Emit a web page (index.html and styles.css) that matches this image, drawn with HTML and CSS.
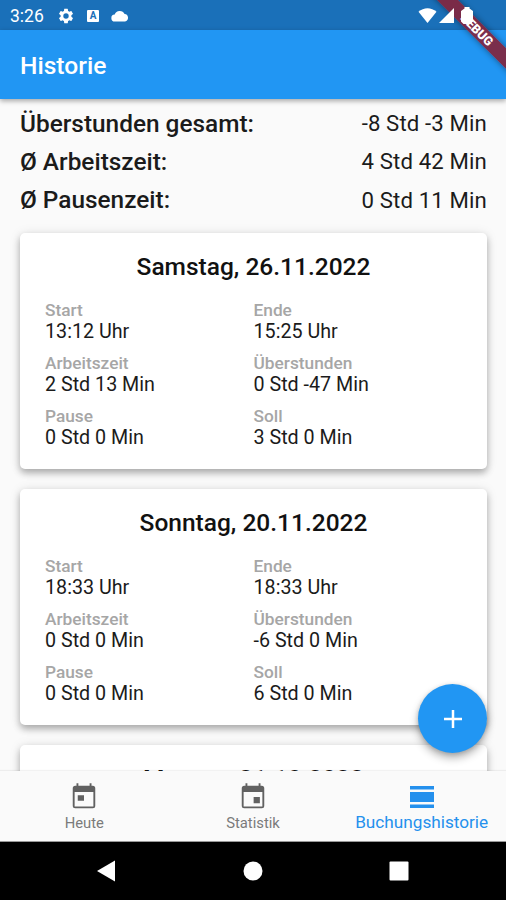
FILE: index.html
```html
<!DOCTYPE html>
<html lang="de">
<head>
<meta charset="utf-8">
<title>Historie</title>
<link rel="stylesheet" href="styles.css">
</head>
<body>
<div class="screen">
  <div class="statusbar">
    <span class="clock">3:26</span>
    <svg class="gear" viewBox="0 0 24 24"><path d="M19.14 12.94c.04-.3.06-.61.06-.94 0-.32-.02-.64-.07-.94l2.03-1.58a.49.49 0 0 0 .12-.61l-1.92-3.32a.49.49 0 0 0-.59-.22l-2.39.96c-.5-.38-1.03-.7-1.62-.94l-.36-2.54a.48.48 0 0 0-.48-.41h-3.84c-.24 0-.43.17-.47.41l-.36 2.54c-.59.24-1.13.57-1.62.94l-2.39-.96a.48.48 0 0 0-.59.22L2.74 8.87c-.12.21-.08.47.12.61l2.03 1.58c-.05.3-.09.63-.09.94s.02.64.07.94l-2.03 1.58a.49.49 0 0 0-.12.61l1.92 3.32c.12.22.37.29.59.22l2.39-.96c.5.38 1.03.7 1.62.94l.36 2.54c.05.24.24.41.48.41h3.84c.24 0 .44-.17.47-.41l.36-2.54c.59-.24 1.13-.56 1.62-.94l2.39.96c.22.08.47 0 .59-.22l1.92-3.32a.47.47 0 0 0-.12-.61l-2.01-1.58zM12 15.6A3.6 3.6 0 1 1 12 8.4a3.6 3.6 0 0 1 0 7.2z"/></svg>
    <span class="keyboard">A</span>
    <svg class="cloud" viewBox="0 0 18 12"><path d="M4 11.500a3.500 3.500 0 0 1-.3-7A5.400 5.400 0 0 1 13.600 4a3.800 3.800 0 0 1 .4 7.500z"/></svg>
    <div class="signals">
      <svg class="wifi" viewBox="0 0 18 15"><path d="M0 3.700C5.200-1 12.800-1 18 3.700L9 15z"/></svg>
      <svg class="cell" viewBox="0 0 15 15"><path d="M15 0v15H0z"/></svg>
      <svg class="battery" viewBox="0 0 12 17"><path d="M3.500 0h5v1.500L12 4v10.500L9.500 17h-7L0 14.500V4l3.500-2.500z"/></svg>
    </div>
  </div>
  <header class="appbar"><h1>Historie</h1></header>
  <div class="banner">DEBUG</div>

  <main class="content">
    <dl class="summary">
      <div><dt>Überstunden gesamt:</dt><dd>-8 Std -3 Min</dd></div>
      <div><dt>Ø Arbeitszeit:</dt><dd>4 Std 42 Min</dd></div>
      <div><dt>Ø Pausenzeit:</dt><dd>0 Std 11 Min</dd></div>
    </dl>
    <section class="card">
      <h2>Samstag, 26.11.2022</h2>
      <dl class="facts">
        <div><dt>Start</dt><dd>13:12 Uhr</dd></div>
        <div><dt>Ende</dt><dd>15:25 Uhr</dd></div>
        <div><dt>Arbeitszeit</dt><dd>2 Std 13 Min</dd></div>
        <div><dt>Überstunden</dt><dd>0 Std -47 Min</dd></div>
        <div><dt>Pause</dt><dd>0 Std 0 Min</dd></div>
        <div><dt>Soll</dt><dd>3 Std 0 Min</dd></div>
      </dl>
    </section>
    <section class="card">
      <h2>Sonntag, 20.11.2022</h2>
      <dl class="facts">
        <div><dt>Start</dt><dd>18:33 Uhr</dd></div>
        <div><dt>Ende</dt><dd>18:33 Uhr</dd></div>
        <div><dt>Arbeitszeit</dt><dd>0 Std 0 Min</dd></div>
        <div><dt>Überstunden</dt><dd>-6 Std 0 Min</dd></div>
        <div><dt>Pause</dt><dd>0 Std 0 Min</dd></div>
        <div><dt>Soll</dt><dd>6 Std 0 Min</dd></div>
      </dl>
    </section>
    <section class="card">
      <h2>Montag, 31.10.2022</h2>
    </section>
    <button class="fab" aria-label="Hinzufügen"><svg viewBox="0 0 18 18"><path d="M9 0v18M0 9h18"/></svg></button>
  </main>

  <nav class="tabs">
    <a class="tab"><svg viewBox="0 0 24 24"><path d="M19 3h-1V1h-1.500v2h-9V1H6v2H5a2 2 0 0 0-2 2v14a2 2 0 0 0 2 2h14a2 2 0 0 0 2-2V5a2 2 0 0 0-2-2zm.5 16.500h-15V8h15v11.500zM7 10.500h5v4.500H7z"/></svg><span>Heute</span></a>
    <a class="tab"><svg viewBox="0 0 24 24"><path d="M17.500 12h-5v5h5v-5zM16.500 1v2h-9V1H6v2H5a2 2 0 0 0-2 2v14a2 2 0 0 0 2 2h14a2 2 0 0 0 2-2V5a2 2 0 0 0-2-2h-1V1h-1.500zm3 18.500h-15V8h15v11.500z"/></svg><span>Statistik</span></a>
    <a class="tab active"><svg viewBox="0 0 24 22"><path d="M0 0h24v3.500H0zM0 6h24v10H0zM0 18.500h24V22H0z"/></svg><span>Buchungshistorie</span></a>
  </nav>
  <div class="sysnav">
    <svg viewBox="0 0 22 22"><path d="M20 .5v21L2 11z"/></svg>
    <svg viewBox="0 0 22 22"><circle cx="11" cy="11" r="9.500"/></svg>
    <svg viewBox="0 0 22 22"><rect x="1.500" y="1.500" width="19" height="19" rx="1"/></svg>
  </div>
</div>
</body>
</html>
```
FILE: styles.css
```css
* { box-sizing: border-box; margin: 0; padding: 0; }
body { font-family: Roboto, "Liberation Sans", sans-serif; color: #1b1b1b; background: #fafafa; }
.screen { position: relative; width: 506px; height: 900px; overflow: hidden; display: flex; flex-direction: column; }

.statusbar { height: 30px; flex: none; background: #1a70b9; display: flex; align-items: center; padding: 1px 33px 0 10px; color: #fff; }
.statusbar svg { fill: #fff; }
.clock { width: 47px; font-size: 17.5px; line-height: 30px; }
.gear { width: 18px; height: 18px; }
.keyboard { width: 12px; height: 12px; margin-left: 12px; border-radius: 1px; background: #fff; color: #1a70b9; font-size: 10px; font-weight: 700; line-height: 12px; text-align: center; }
.cloud { width: 18px; height: 12px; margin-left: 12px; }
.signals { position: relative; z-index: 3; margin-left: auto; display: flex; align-items: center; margin-top: -1px; }
.wifi { width: 19px; height: 15px; }
.cell { width: 15px; height: 15px; margin-left: 2px; }
.battery { width: 12px; height: 17px; margin-left: 7px; }

.appbar { height: 69px; flex: none; background: #2196f3; display: flex; align-items: center; padding: 2px 0 0 20px; position: relative; z-index: 1; box-shadow: 0 2px 5px rgba(0,0,0,.34); }
.appbar h1 { color: #fff; font-size: 24.6px; font-weight: 500; line-height: 30px; }
.banner { position: absolute; z-index: 2; left: 412px; top: 22px; width: 130px; height: 15px; transform: rotate(45deg); background: rgba(130,37,62,.92); box-shadow: 0 0 6px rgba(0,0,0,.45); color: #fff; font-size: 12.5px; font-weight: 900; line-height: 15px; text-align: center; }

.content { position: relative; flex: 1; min-height: 0; overflow: hidden; padding: 5px 19px 0 20px; }
.summary > div { display: flex; justify-content: space-between; align-items: center; height: 38.3px; }
.summary dt { font-size: 24.4px; font-weight: 500; }
.summary dd { font-size: 22.2px; font-weight: 400; letter-spacing: .13px; }
.card { height: 236px; margin: 14px 0 20px; padding: 19px 25px; border-radius: 5px; background: #fff; box-shadow: 0 4px 7px rgba(0,0,0,.28), 0 1px 12px rgba(0,0,0,.1); }
.card + .card { margin-top: 0; }
.card h2 { font-size: 24.5px; font-weight: 500; line-height: 30px; text-align: center; color: #111; }
.facts { display: grid; grid-template-columns: 1fr 1fr; row-gap: 11px; margin-top: 18.5px; }
.facts > div { height: 42px; }
.facts dt { font-size: 17.3px; font-weight: 500; line-height: 21px; color: #a6a6a6; }
.facts dd { font-size: 19.7px; line-height: 21px; }
.fab { position: absolute; left: 418px; top: 585px; width: 69px; height: 69px; border: 0; border-radius: 50%; background: #2196f3; display: grid; place-items: center; box-shadow: 0 5px 9px rgba(0,0,0,.3), 0 1px 4px rgba(0,0,0,.15); }
.fab svg { width: 18px; height: 18px; fill: none; stroke: #fff; stroke-width: 2.5; }

.tabs { height: 71px; flex: none; position: relative; background: #fafafa; display: grid; grid-template-columns: repeat(3, 1fr); border-bottom: 1px solid #999; box-shadow: 0 -1px 1px rgba(0,0,0,.05); }
.tab { display: flex; flex-direction: column; align-items: center; padding-top: 11px; color: #7b7b7b; font-size: 14.8px; }
.tab svg { width: 30px; height: 30px; fill: #616161; }
.tab span { line-height: 20px; margin-top: 1px; white-space: nowrap; }
.tab.active { color: #2490ed; font-size: 17.2px; }
.tab.active svg { width: 24px; height: 22px; fill: #2490ed; margin: 4px 0 3px; }
.sysnav { height: 58px; flex: none; background: #000; display: flex; justify-content: space-between; align-items: center; padding: 0 96px 0 95px; }
.sysnav svg { width: 22px; height: 22px; fill: #fff; }
```
